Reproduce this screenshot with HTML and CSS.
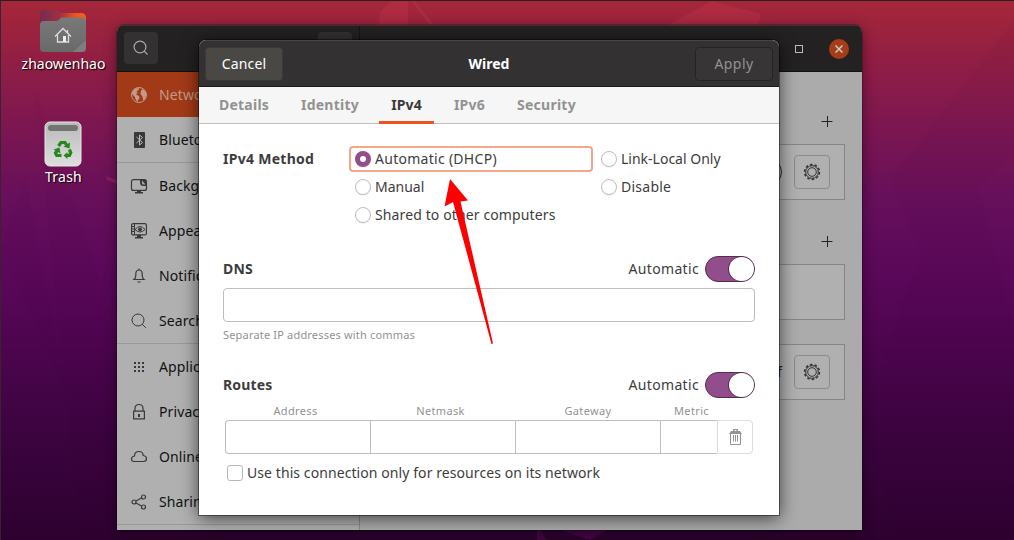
FILE: index.html
```html
<!DOCTYPE html>
<html lang="en">
<head>
<meta charset="utf-8">
<title>Wired</title>
<link rel="stylesheet" href="styles.css">
</head>
<body>
<div class="desktop">
  <svg class="wallpaper" width="1014" height="540" viewBox="0 0 1014 540">
    <g fill="#e04058" fill-opacity=".2">
      <path d="M379 22L380 12L391 1H408V25H379z"/>
      <path d="M411 1H415L434 25H430z"/>
      <path d="M668 25L712 1L761 14L758 25z"/>
    </g>
    <path d="M106 176L117 180V184L107 180z" fill="#e04070" fill-opacity=".25"/>
    <path d="M0 250L25 175L65 390L0 245zM35 90L117 330V540H80z" fill="#300040" fill-opacity=".035"/>
    <path d="M862 420L965 130L1014 330V540H900zM890 180L1014 20V150L920 250z" fill="#300040" fill-opacity=".035"/>
    <path d="M537 530H541L546 540H537zM590 540L608 530H560z" fill="#751070" fill-opacity=".35"/>
  </svg>

  <div class="launchers">
    <div class="launcher">
      <svg width="48" height="44" viewBox="0 0 48 44">
        <defs>
          <linearGradient id="tab" x1="0" x2="1"><stop offset="0" stop-color="#772953"/><stop offset=".45" stop-color="#a13142"/><stop offset=".75" stop-color="#e95420"/><stop offset="1" stop-color="#f26322"/></linearGradient>
          <linearGradient id="fold" x1="0" x2="0" y1="0" y2="1"><stop offset="0" stop-color="#797979"/><stop offset="1" stop-color="#696969"/></linearGradient>
        </defs>
        <path d="M1 12V5q0-4 4-4h12q3 0 5 3h20q5 0 5 5v6H1z" fill="url(#tab)"/>
        <path d="M1 16q0-4 4-4h12q3 0 5-3.500h21q4 0 4 4v26.500q0 4-4 4H5q-4 0-4-4z" fill="url(#fold)"/>
        <path d="M47 31v8q0 4-4 4h-9z" fill="#8b8b8b" opacity=".6"/>
        <path d="M16 27.500L24 19.500L32 27.500M18.500 26V33H29.500V26M28.500 21v3" fill="none" stroke="#ddd" stroke-width="1.300"/>
        <path d="M24 27h3v6h-3z" fill="#eee"/>
      </svg>
      <span class="launcher-name user">zhaowenhao</span>
    </div>
    <div class="launcher trash">
      <svg width="40" height="48" viewBox="0 0 40 48">
        <defs><linearGradient id="bin" x1="0" x2="0" y1="0" y2="1"><stop offset="0" stop-color="#b9b9b9"/><stop offset="1" stop-color="#dedede"/></linearGradient></defs>
        <rect x="2" y="2" width="36" height="44" rx="5" fill="url(#bin)" stroke="#e6e6e6"/>
        <rect x="5" y="5" width="30" height="6" rx="3" fill="#747474"/>
        <g fill="none" stroke="#26871b" stroke-width="3.200">
          <path d="M15.500 26L18 22.500H22L23.500 25"/>
          <path d="M26.300 29.500L27.800 32.500L26.500 35.500H23.500"/>
          <path d="M18.500 35.500H13.800L12.500 33L14.200 30.500"/>
        </g>
        <g fill="#26871b">
          <path d="M20.500 26.500L27 22.500L26.500 28.500z"/>
          <path d="M24.500 32V39L20.500 35.500z"/>
          <path d="M10.500 29.500L16.500 27.500L17.500 33.500z"/>
        </g>
      </svg>
      <span class="launcher-name">Trash</span>
    </div>
  </div>

  <div class="settings">
    <div class="settings-bar">
      <div class="bar-left">
        <div class="dark-button"><svg width="16" height="16" viewBox="0 0 16 16" fill="none" stroke="#aaa" stroke-width="1.200"><circle cx="7" cy="7" r="5.900"/><path d="M11.200 11.200L14.500 14.500"/></svg></div>
        <div class="dark-button"></div>
      </div>
      <div class="bar-right">
        <svg width="8" height="8" viewBox="0 0 8 8"><rect x=".5" y=".5" width="7" height="7" fill="none" stroke="#bbb"/></svg>
        <div class="close"><svg width="8" height="8" viewBox="0 0 8 8"><path d="M.5.5l7 7m0-7l-7 7" stroke="#ccc" stroke-width="1.500"/></svg></div>
      </div>
    </div>
    <div class="settings-body">
      <div class="sidebar">
        <div class="item selected"><svg width="18" height="18" viewBox="0 0 18 18"><circle cx="9" cy="9" r="7.500" fill="none" stroke="#c29a8b"/><path d="M2.500 5L5 2.500 9 2 8.500 4 6.500 5.500 7.500 7 6 8.500 9 10 9.500 12 7 16 5.500 13 4.500 10.500 2 8zM11 4.500l2-1.500 2.500 2.500 1 3-1.500 4.500-1.800 1.500-.7-4-2-2.500z" fill="#c29a8b"/></svg><span>Network</span></div>
        <div class="item"><svg width="18" height="18" viewBox="0 0 18 18"><rect x="4" y="1" width="11" height="16" rx="1" fill="#393939"/><path d="M6.500 6l6 5.500-3 2.500V4l3 2.500-6 5.500" fill="none" stroke="#bbb"/></svg><span>Bluetooth</span></div>
        <div class="item line"><svg width="18" height="18" viewBox="0 0 18 18"><path d="M10.500 2.600H3.500q-2 0-2 2v6.800q0 2 2 2h11q2 0 2-2V8.500" fill="none" stroke="#393939" stroke-width="1.200"/><path d="M10 2h4.500q2.500 0 2.500 2.500V9h-3.500q-3.500 0-3.500-3.500zM7 13h4v2h2v1.500H5V15h2z" fill="#393939"/><path d="M12 3.500L15.500 7.500H13.500q-1.500 0-1.500-1.500z" fill="#aaa"/></svg><span>Background</span></div>
        <div class="item"><svg width="18" height="18" viewBox="0 0 18 18"><rect x="1.600" y="1.600" width="14.800" height="11.300" rx="1.500" fill="none" stroke="#393939" stroke-width="1.200"/><path d="M4.500 2v11M1 4.500h3M1 7h3M1 9.500h3" stroke="#393939"/><path d="M5 7.500q5-6 10 0q-5 5-10 0z" fill="none" stroke="#393939"/><circle cx="10" cy="7.300" r="1.900" fill="#393939"/><path d="M7 13h4v2h2v1.500H5V15h2z" fill="#393939"/></svg><span>Appearance</span></div>
        <div class="item"><svg width="18" height="18" viewBox="0 0 18 18"><path d="M4 12.500q1.800-1.500 1.800-4V7q0-4 3.200-4t3.200 4v1.500q0 2.500 1.800 4zM9 1.500V3" fill="none" stroke="#393939" stroke-width="1.200"/><path d="M7 14.500h4q-2 2.500-4 0z" fill="#393939"/></svg><span>Notifications</span></div>
        <div class="item"><svg width="18" height="18" viewBox="0 0 18 18" fill="none" stroke="#393939"><circle cx="8" cy="8" r="6"/><path d="M12.300 12.300L15.800 15.800"/></svg><span>Search</span></div>
        <div class="item line"><svg width="18" height="18" viewBox="0 0 18 18" stroke="#393939" stroke-width="2" stroke-dasharray="2 2"><path d="M4 5h10M4 9h10M4 13h10"/></svg><span>Applications</span></div>
        <div class="item"><svg width="18" height="18" viewBox="0 0 18 18"><path d="M3.600 8.100h10.800v7.800H3.600zM5 8V5.500q0-4 4-4t4 4V8" fill="none" stroke="#393939" stroke-width="1.200"/><path d="M8 11h2v3H8z" fill="#393939"/></svg><span>Privacy</span></div>
        <div class="item"><svg width="18" height="18" viewBox="0 0 18 18"><path d="M4 13.500q-2.500 0-2.500-2.500T4.500 8Q4.500 3.500 9 3.500q4 0 4.200 4 3.300.5 3.300 3 0 3-3 3z" fill="none" stroke="#393939" stroke-width="1.200"/></svg><span>Online Accounts</span></div>
        <div class="item"><svg width="18" height="18" viewBox="0 0 18 18" fill="none" stroke="#393939" stroke-width="1.200"><circle cx="4" cy="9" r="2"/><circle cx="13.500" cy="4" r="2"/><circle cx="13.500" cy="14" r="2"/><path d="M6 8l5.500-3M6 10l5.500 3"/></svg><span>Sharing</span></div>
        <div class="item line"></div>
      </div>
      <div class="panel">
        <div class="add"><svg width="12" height="12"><path d="M.5 6.500h11M6.500 1v11" stroke="#222"/></svg></div>
        <div class="box"><span class="switch-edge"></span><div class="gear"><svg width="18" height="18" viewBox="0 0 18 18" fill="none" stroke="#333"><circle cx="9" cy="9" r="7.400" stroke-width="1.600" stroke-dasharray="2.600 2.050"/><circle cx="9" cy="9" r="6.300"/><circle cx="9" cy="9" r="4.300"/></svg></div></div>
        <div class="add second"><svg width="12" height="12"><path d="M.5 6.500h11M6.500 1v11" stroke="#222"/></svg></div>
        <div class="box"></div>
        <div class="box last"><span class="off">Off</span><div class="gear"><svg width="18" height="18" viewBox="0 0 18 18" fill="none" stroke="#333"><circle cx="9" cy="9" r="7.400" stroke-width="1.600" stroke-dasharray="2.600 2.050"/><circle cx="9" cy="9" r="6.300"/><circle cx="9" cy="9" r="4.300"/></svg></div></div>
      </div>
    </div>
  </div>

  <div class="dialog">
    <div class="dialog-bar">
      <div class="cancel"><span>Cancel</span></div>
      <div class="title">Wired</div>
      <div class="apply"><span>Apply</span></div>
    </div>
    <div class="tabs">
      <div class="tab t-details">Details</div><div class="tab t-identity">Identity</div><div class="tab t-v4 active">IPv4</div><div class="tab t-v6">IPv6</div><div class="tab t-security">Security</div>
    </div>
    <div class="content">
      <div class="method">
        <div class="heading h-method">IPv4 Method</div>
        <div class="options">
          <div class="option focused"><i class="radio on"></i><span class="o-auto">Automatic (DHCP)</span></div>
          <div class="option"><i class="radio"></i><span class="o-link">Link-Local Only</span></div>
          <div class="option"><i class="radio"></i><span class="o-manual">Manual</span></div>
          <div class="option"><i class="radio"></i><span class="o-disable">Disable</span></div>
          <div class="option"><i class="radio"></i><span class="o-shared">Shared to other computers</span></div>
        </div>
      </div>
      <div class="row dns"><div class="heading">DNS</div><div class="auto"><span>Automatic</span><div class="toggle"><i></i></div></div></div>
      <div class="entry"></div>
      <div class="hint">Separate IP addresses with commas</div>
      <div class="row routes"><div class="heading h-routes">Routes</div><div class="auto"><span>Automatic</span><div class="toggle"><i></i></div></div></div>
      <div class="columns"><span>Address</span><span>Netmask</span><span>Gateway</span><span>Metric</span></div>
      <div class="cells"><div></div><div></div><div></div><div></div>
        <div class="remove"><svg width="13" height="16" viewBox="0 0 13 16"><path d="M4 0h5v2h2l2 3H0l2-3h2zM5.500 1v1h2V1z" fill="#949494" fill-rule="evenodd"/><path d="M1.500 5v10.500h10V5M4.500 6v6.500M6.500 6v6.500M8.500 6v6.500" fill="none" stroke="#949494"/></svg></div>
      </div>
      <div class="only"><i class="check"></i><span>Use this connection only for resources on its network</span></div>
    </div>
  </div>

  <svg class="arrow" width="60" height="170" viewBox="440 176 60 170"><path d="M450 179L468 200.500L460.500 201.500L493 343.500L491.500 344L453 202L444.500 206.500z" fill="#f00"/></svg>
</div>
</body>
</html>
```
FILE: styles.css
```css
* { box-sizing: border-box; }
body { margin: 0; font: 14px/20px "Noto Sans", sans-serif; color: #3d3d3d; }
svg { display: block; flex: none; }
span { white-space: nowrap; }

.desktop {
  position: relative; width: 1014px; height: 540px; overflow: hidden;
  border-top: 1px solid #242023; border-left: 1px solid #3a2230;
  background: linear-gradient(180deg, #a52739 0, #921f43 55px, #7e1750 120px, #660f5b 200px, #5b085a 270px, #4c054d 350px, #3c0440 430px, #2d012f 540px);
}
.wallpaper { position: absolute; left: -1px; top: -1px; }

.launchers { position: absolute; left: 11px; top: 8px; width: 102px; display: flex; flex-direction: column; gap: 47px; }
.launcher { display: flex; flex-direction: column; align-items: center; }
.launcher-name { color: #fff; text-shadow: 1px 1px 1px #000; line-height: 20px; margin-top: 1px; padding-left: 1px; }
.trash svg { margin-top: -1px; }
.trash .launcher-name { margin-top: -1px; letter-spacing: .25px; }

.settings { position: absolute; left: 116px; top: 24px; width: 745px; height: 505px; border-radius: 7px 7px 0 0; overflow: hidden; background: #ababab; box-shadow: 0 0 0 1px rgba(0,0,0,.2), 0 3px 14px rgba(0,0,0,.45); }
.settings-bar { height: 47px; display: flex; background: #232122; border-top: 1px solid #3a3637; border-bottom: 1px solid #111; }
.bar-left { width: 243px; border-right: 1px solid #151515; padding: 6px 7px; display: flex; justify-content: space-between; }
.dark-button { width: 34px; height: 32px; border-radius: 4px; background: #333132; display: grid; place-items: center; }
.bar-right { flex: 1; display: flex; align-items: center; justify-content: flex-end; gap: 26px; padding-right: 13px; }
.close { width: 20px; height: 20px; border-radius: 50%; background: #a63c18; display: grid; place-items: center; }
.settings-body { display: flex; height: 458px; }
.sidebar { width: 243px; background: #b0b0b0; border-right: 1px solid #8a8a8a; }
.item { height: 45px; padding-left: 13px; display: flex; align-items: center; gap: 11px; color: #111; letter-spacing: .1px; }
.item.line { height: 46px; border-top: 1px solid #999; }
.item.selected { background: #a33a17; color: #c29a8b; }
.panel { flex: 1; padding: 43px 17px 0 0; }
.add { display: flex; justify-content: flex-end; padding-right: 12px; height: 29px; }
.add.second { margin-top: 35px; }
.box { height: 56px; border: 1px solid #868686; background: #b0b0b0; display: flex; align-items: center; justify-content: flex-end; padding-right: 14px; gap: 12px; }
.box.last { margin-top: 24px; }
.gear { width: 36px; height: 34px; border: 1px solid #8b8b8b; border-radius: 4px; display: grid; place-items: center; }
.switch-edge { width: 50px; height: 26px; border: 1px solid #3b2038; border-radius: 13px; }
.off { color: #222; }

.dialog { position: absolute; left: 198px; top: 39px; width: 580px; height: 475px; border-radius: 7px 7px 0 0; background: #fff; box-shadow: 0 0 0 1px rgba(0,0,0,.42), 0 3px 18px rgba(0,0,0,.65); }
.dialog-bar { height: 47px; border-radius: 7px 7px 0 0; background: #333132; border-top: 1px solid #494646; border-bottom: 1px solid #1b1a1a; padding: 5px 6px; display: flex; align-items: center; justify-content: space-between; }
.cancel, .apply { width: 78px; height: 34px; border-radius: 4px; display: grid; place-items: center; }
.cancel { background: #4a4845; color: #fff; border: 1px solid #3c3a38; letter-spacing: .15px; }
.apply { color: #929292; background: #373536; border: 1px solid #252324; letter-spacing: .4px; }
.title { color: #fff; font-weight: 700; }
.tabs { height: 37px; background: #f6f6f6; border-bottom: 1px solid #bfbfbf; display: flex; padding-left: 8px; }
.tab { height: 37px; line-height: 35px; font-weight: 700; color: #929292; text-align: center; border-bottom: 3px solid transparent; letter-spacing: .25px; }
.t-details { width: 74px; } .t-identity { width: 98px; } .t-v4 { width: 55px; letter-spacing: .1px; } .t-v6 { width: 71px; } .t-security { width: 83px; }
.tab.active { color: #3a3a3a; border-color: #e95420; }
.content { padding: 22px 24px 0; }
.heading { flex: none; font-weight: 700; letter-spacing: .15px; }
.method { display: flex; height: 110px; }
.method .heading { width: 126px; line-height: 26px; letter-spacing: .28px; }
.options { flex: none; display: grid; grid-template-columns: 244px 160px; grid-auto-rows: 26px; gap: 2px; }
.option { display: flex; align-items: center; gap: 4px; padding-left: 6px; }
.o-auto { letter-spacing: .28px; }
.o-disable { letter-spacing: .25px; }
.o-shared { letter-spacing: .12px; }
.focused { border: 2px solid #f3a68b; border-radius: 4px; padding-left: 4px; }
.radio { width: 16px; height: 16px; border: 1px solid #bdbdbd; border-radius: 50%; background: #fff; flex: none; box-shadow: 0 1px 1px rgba(0,0,0,.06); }
.radio.on { border: 5px solid #924d8b; }
.row { display: flex; justify-content: space-between; align-items: center; height: 26px; }
.auto { display: flex; gap: 6px; align-items: center; letter-spacing: .33px; }
.toggle { width: 50px; height: 26px; border: 1px solid #512d4e; border-radius: 13px; background: #924d8b; display: flex; justify-content: flex-end; }
.toggle i { width: 25px; height: 24px; border-radius: 50%; background: #fff; box-shadow: -1px 0 #512d4e; }
.entry { margin-top: 6px; height: 34px; border: 1px solid #bdbdbd; border-radius: 4px; }
.hint { margin-top: 5px; height: 16px; line-height: 16px; font-size: 11px; letter-spacing: .18px; color: #929292; }
.routes { margin-top: 29px; }
.columns { display: grid; grid-template-columns: 145px 145px 150px 57px; margin-top: 5px; text-align: center; font-size: 11px; line-height: 16px; height: 17px; letter-spacing: .35px; color: #929292; }
.cells { display: grid; grid-template-columns: 145px 145px 145px 57px 36px; height: 34px; margin: 0 2px; }
.cells div { border: 1px solid #bdbdbd; border-right: 0; }
.cells div:first-child { border-radius: 4px 0 0 4px; }
.cells .remove { border: 1px solid #ddd; border-radius: 0 4px 4px 0; display: grid; place-items: center; }
.only { margin: 9px 0 0 4px; display: flex; align-items: center; gap: 4px; height: 20px; letter-spacing: .08px; }
.check { width: 16px; height: 16px; border: 1px solid #b8b8b8; border-radius: 3px; }
.arrow { position: absolute; left: 439px; top: 175px; }
```
